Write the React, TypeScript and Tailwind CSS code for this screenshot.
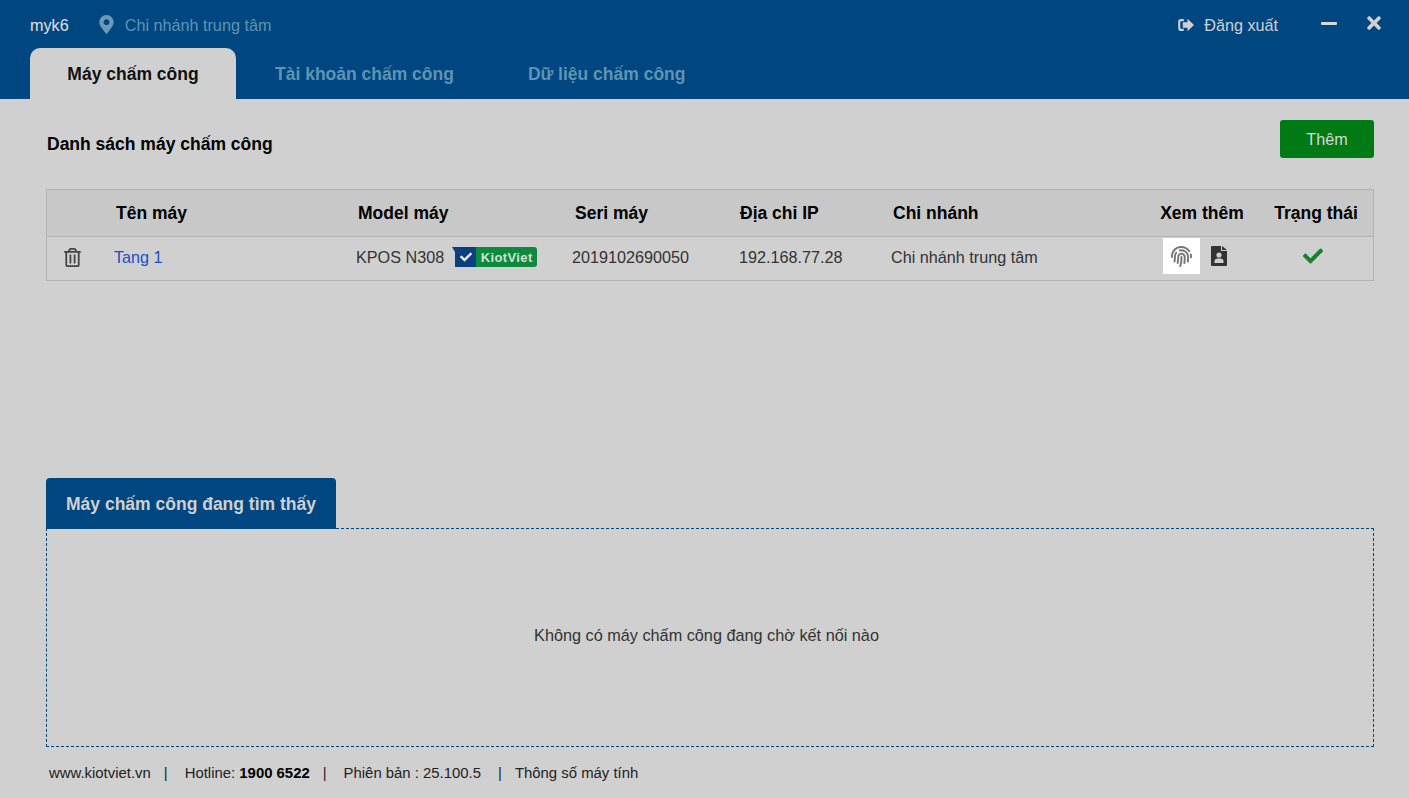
import { FaCheck, FaFingerprint, FaMapMarkerAlt, FaRegTrashAlt, FaTimes } from "react-icons/fa";

const headers = ["", "Tên máy", "Model máy", "Seri máy", "Địa chỉ IP", "Chi nhánh"];

function LogoutIcon() {
  return (
    <svg viewBox="0 0 16 14" className="h-3.5 w-4" fill="#d0d0d0">
      <path d="M5.800 1H3a2.800 2.800 0 0 0-2.800 2.800v6.400A2.800 2.800 0 0 0 3 13h2.800v-2.200H3a.7.7 0 0 1-.7-.7V3.900a.7.7 0 0 1 .7-.7h2.800z" />
      <path d="M9.500.8 16 7l-6.500 6.200V9.800H4.800V4.200h4.700z" />
    </svg>
  );
}

function ContactFileIcon() {
  return (
    <svg viewBox="0 0 16 20" className="h-[20px] w-[16px]">
      <path d="M0 1a1 1 0 0 1 1-1h9v5h6v14a1 1 0 0 1-1 1H1a1 1 0 0 1-1-1z" fill="#333" />
      <path d="M11 0l5 4h-5z" fill="#333" />
      <circle cx="8" cy="9" r="2.600" fill="#d0d0d0" />
      <path d="M3.500 17v-2c0-1.800 1.800-2.400 4.500-2.400s4.500.6 4.500 2.400v2z" fill="#d0d0d0" />
    </svg>
  );
}

function KiotVietBadge() {
  return (
    <div className="ml-[8px] flex h-[20px] w-[85px] items-stretch">
      <div className="relative w-[24px]">
        <svg viewBox="0 0 24 20" className="h-[20px] w-[24px]">
          <path d="M0 0h24v20H3V5z" fill="#0b3f80" />
        </svg>
        <FaCheck size={12} className="absolute left-[8px] top-[4px] text-[#e8e8e8]" />
      </div>
      <div className="flex flex-1 items-center justify-center rounded-r-[3px] bg-[#0d8a3e] text-[13px] font-bold tracking-[0.4px] text-[#cfe2d4]">
        KiotViet
      </div>
    </div>
  );
}

export default function App() {
  return (
    <div className="flex h-[798px] w-[1409px] flex-col overflow-hidden bg-[#d0d0d0] font-['Liberation_Sans',Arial,sans-serif] text-[#333]">
      <header className="h-[99px] shrink-0 bg-[#004680]">
        <div className="flex h-[48px] items-center pl-[30px] pr-[25px] pt-[2px] text-[16.200px]">
          <span className="text-[#e0e0e0]">myk6</span>
          <FaMapMarkerAlt size={19} className="ml-[28px] -mt-[2px] text-[#6a9ab8]" />
          <span className="ml-[9px] text-[#5f94b4]">Chi nhánh trung tâm</span>
          <div className="ml-auto flex items-center text-[#d0d0d0]">
            <LogoutIcon />
            <span className="ml-[10px]">Đăng xuất</span>
            <div className="-mt-[3px] ml-[43px] h-[3px] w-[16px] rounded-[1px] bg-[#d8d8d8]" />
            <FaTimes size={20} className="-mt-[3px] ml-[27px]" />
          </div>
        </div>
        <nav className="flex h-[51px] pl-[30px] text-[17.500px] font-bold text-[#5f94b4]">
          <div className="flex w-[206px] items-center justify-center rounded-t-[10px] bg-[#d0d0d0] pt-[1px] text-[#111]">Máy chấm công</div>
          <div className="ml-[39px] flex items-center pt-[1px]">Tài khoản chấm công</div>
          <div className="ml-[74px] flex items-center pt-[1px]">Dữ liệu chấm công</div>
        </nav>
      </header>

      <main className="flex flex-1 flex-col px-[35px]">
        <div className="flex h-[90px] items-center justify-between pl-[12px]">
          <h1 className="text-[17.500px] font-bold text-black">Danh sách máy chấm công</h1>
          <button className="mb-[10px] h-[38px] w-[94px] rounded-[3px] bg-[#007a14] text-[16.200px] text-[#d8d8d8]">Thêm</button>
        </div>

        <div className="ml-[11px] h-[92px] border border-[#b4b4b4]">
          <div className="grid h-[47px] grid-cols-[69px_242px_217px_165px_153px_252px_114px_114px] items-center border-b border-[#b4b4b4] bg-[#c8c8c8] pt-[1px] text-[17.500px] font-bold text-black">
            {headers.map((h) => (
              <div key={h}>{h}</div>
            ))}
            <div className="text-center">Xem thêm</div>
            <div className="text-center">Trạng thái</div>
          </div>
          <div className="grid h-[43px] grid-cols-[67px_242px_216px_167px_152px_254px_114px_114px] items-center pb-[2px] text-[16.200px]">
            <div className="flex justify-center pr-[16px]">
              <FaRegTrashAlt size={19} className="text-[#444]" />
            </div>
            <div className="text-[#1b4fc4]">Tang 1</div>
            <div className="flex items-center">
              KPOS N308
              <KiotVietBadge />
            </div>
            <div>2019102690050</div>
            <div>192.168.77.28</div>
            <div>Chi nhánh trung tâm</div>
            <div className="flex items-start gap-[11px] self-start pl-[18px] pt-[1px]">
              <div className="flex h-[36px] w-[37px] items-center justify-center bg-white">
                <FaFingerprint size={21} className="text-[#777]" />
              </div>
              <div className="pt-[8px]">
                <ContactFileIcon />
              </div>
            </div>
            <div className="flex justify-center pb-[4px] pr-[6px]">
              <FaCheck size={20} className="text-[#1a8030]" />
            </div>
          </div>
        </div>

        <div className="ml-[11px] mt-[197px]">
          <div className="relative flex h-[51px] w-[290px] items-center justify-center rounded-t-[4px] bg-[#004680] pt-[1px] text-[17.500px] font-bold text-[#d0d0d0]">
            Máy chấm công đang tìm thấy
          </div>
          <div className="-mt-[1px] flex h-[219px] items-center justify-center border border-dashed border-[#004680] pb-[4px] pr-[7px] text-[16.250px]">
            Không có máy chấm công đang chờ kết nối nào
          </div>
        </div>

        <footer className="ml-[14px] mt-[15px] flex items-center text-[14.900px] text-[#222]">
          <span>www.kiotviet.vn</span>
          <span className="ml-[13px] mr-[17px]">|</span>
          <span>
            Hotline: <b className="text-black">1900 6522</b>
          </span>
          <span className="ml-[13px] mr-[17px]">|</span>
          <span>Phiên bản : 25.100.5</span>
          <span className="ml-[17px] mr-[13px]">|</span>
          <span>Thông số máy tính</span>
        </footer>
      </main>
    </div>
  );
}
